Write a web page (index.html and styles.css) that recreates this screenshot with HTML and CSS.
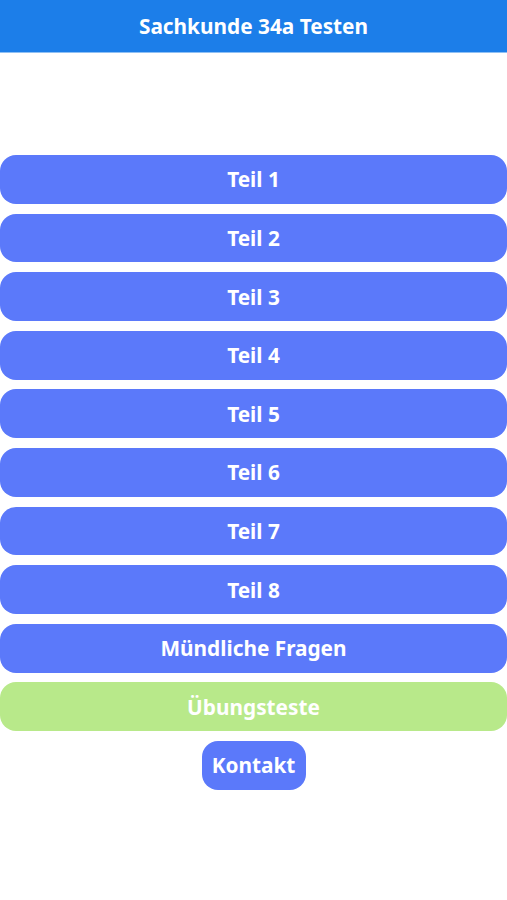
FILE: index.html
```html
<!DOCTYPE html>
<html>
<head>
  <meta charset="utf-8">
  <title>Sachkunde 34a Testen</title>
  <link rel="stylesheet" href="styles.css">
</head>
<body>
  <div class="header">Sachkunde 34a Testen</div>
  <div class="menu">
    <a class="btn">Teil 1</a>
    <a class="btn">Teil 2</a>
    <a class="btn">Teil 3</a>
    <a class="btn">Teil 4</a>
    <a class="btn">Teil 5</a>
    <a class="btn">Teil 6</a>
    <a class="btn">Teil 7</a>
    <a class="btn">Teil 8</a>
    <a class="btn">Mündliche Fragen</a>
    <a class="btn btn-green">Übungsteste</a>
    <a class="btn btn-small">Kontakt</a>
  </div>
</body>
</html>
```
FILE: styles.css
```css
html, body {
  margin: 0;
  padding: 0;
  background: #fff;
  font-family: "Noto Sans", "Open Sans", sans-serif;
}
.header {
  height: 52px;
  line-height: 53px;
  background: #1c7ee9;
  border-bottom: 1px solid #8fc0f4;
  color: #fff;
  font-weight: 700;
  font-size: 20.8px;
  text-align: center;
}
.menu {
  display: flex;
  flex-direction: column;
  align-items: stretch;
  gap: 9.8px;
  padding-top: 102px;
}
.btn {
  display: flex;
  align-items: center;
  justify-content: center;
  height: 48.8px;
  border-radius: 16px;
  background: #5b79fa;
  color: #fff;
  font-weight: 700;
  font-size: 20.8px;
}
.btn-green {
  background: #b8e98a;
}
.btn-small {
  align-self: center;
  width: 104px;
}
```
